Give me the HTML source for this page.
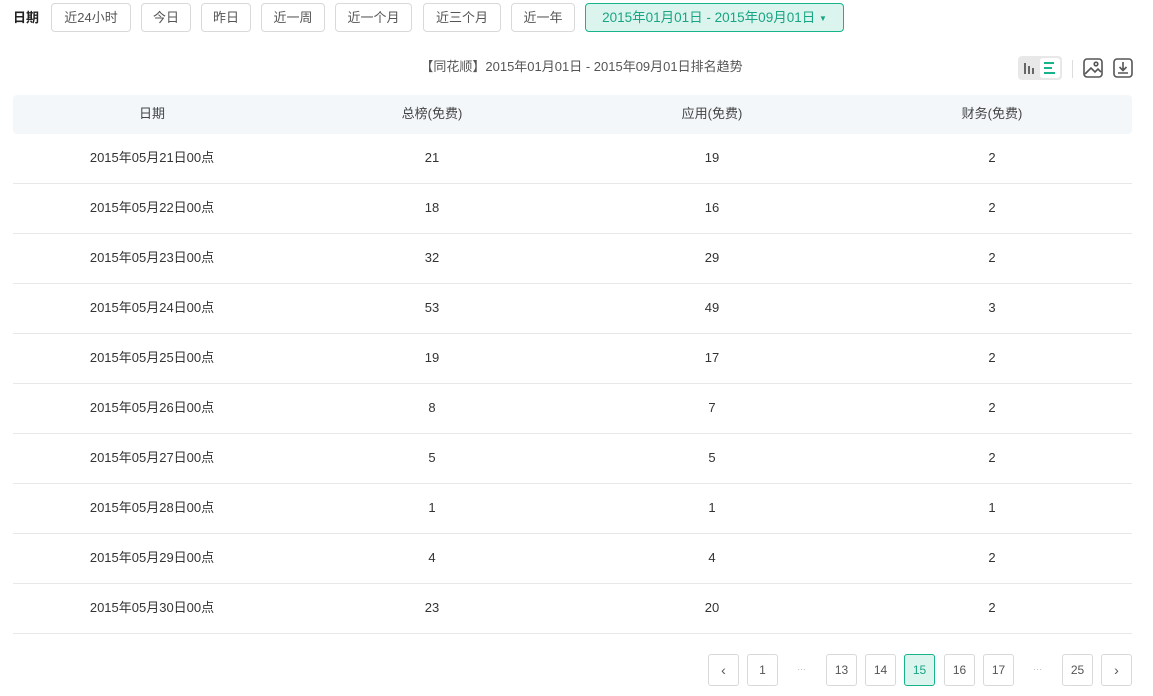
<!DOCTYPE html>
<html><head><meta charset="utf-8"><style>
*{margin:0;padding:0;box-sizing:border-box}
body{width:1153px;height:696px;background:#fff;font-family:"Liberation Sans","Noto Sans CJK SC",sans-serif;color:#333;position:relative;overflow:hidden;font-size:13px}
.abs{position:absolute}
.btn{position:absolute;top:3px;height:29px;border:1px solid #d9d9d9;border-radius:4px;line-height:27px;text-align:center;color:#555;font-size:13px}
.sel{border-color:#17b38a;background:#dcf4ee;color:#17a583}
.th{position:absolute;top:95px;left:13px;width:1119px;height:39px;background:#f3f7fa;border-radius:4px}
.cell{position:absolute;width:280px;text-align:center;font-size:13px;line-height:16px;height:16px}
.line{position:absolute;left:13px;width:1119px;height:1px;background:#e8e8e8}
.pg{position:absolute;top:654px;width:31px;height:32px;border:1px solid #d9d9d9;border-radius:3px;text-align:center;line-height:30px;font-size:12px;color:#555}
.dots{position:absolute;top:654px;line-height:30px;font-size:9px;color:#bbb}
</style></head><body>
<div class="abs" style="left:13px;top:3px;line-height:29px;font-weight:bold;font-size:13px;color:#222">日期</div>
<div class="btn" style="left:51px;width:80px">近24小时</div>
<div class="btn" style="left:141px;width:50px">今日</div>
<div class="btn" style="left:201px;width:50px">昨日</div>
<div class="btn" style="left:261px;width:64px">近一周</div>
<div class="btn" style="left:335px;width:77px">近一个月</div>
<div class="btn" style="left:423px;width:78px">近三个月</div>
<div class="btn" style="left:511px;width:64px">近一年</div>
<div class="btn sel" style="left:585px;width:259px;font-size:13.5px">2015年01月01日 - 2015年09月01日 <span style="font-size:8px;vertical-align:1px">▼</span></div>

<div class="abs" style="left:0;width:1153px;top:59px;line-height:16px;text-align:center;font-size:13px;color:#555;padding-left:10px">【同花顺】2015年01月01日 - 2015年09月01日排名趋势</div>

<div class="abs" style="left:1018px;top:56px;width:44px;height:24px;background:#e8e8e8;border-radius:4px"></div>
<div class="abs" style="left:1040px;top:58px;width:20px;height:20px;background:#fff;border-radius:3px"></div>
<svg class="abs" style="left:1018px;top:56px" width="44" height="24">
<g stroke="#666" stroke-width="2"><line x1="7" y1="7" x2="7" y2="18"/><line x1="11" y1="10" x2="11" y2="18"/><line x1="15" y1="12" x2="15" y2="18"/></g>
<g stroke="#17b38a" stroke-width="2"><line x1="26" y1="7" x2="36" y2="7"/><line x1="26" y1="12" x2="34" y2="12"/><line x1="26" y1="17" x2="37" y2="17"/></g>
</svg>
<div class="abs" style="left:1072px;top:60px;width:1px;height:18px;background:#ddd"></div>
<svg class="abs" style="left:1082px;top:57px" width="22" height="22" fill="none" stroke="#555" stroke-width="1.6">
<rect x="2" y="2" width="18" height="18" rx="3"/><path d="M3 17 L9 11 L13 15 L16 12 L19 15"/><circle cx="14" cy="7" r="1.8"/>
</svg>
<svg class="abs" style="left:1112px;top:57px" width="22" height="22" fill="none" stroke="#555" stroke-width="1.6">
<rect x="2" y="2" width="18" height="18" rx="3"/><path d="M11 5 V13 M7.5 10 L11 13.5 L14.5 10 M6 16 H16"/>
</svg>

<div class="th"></div>
<div class="cell" style="left:12px;top:106px;color:#444">日期</div>
<div class="cell" style="left:292px;top:106px;color:#444">总榜(免费)</div>
<div class="cell" style="left:572px;top:106px;color:#444">应用(免费)</div>
<div class="cell" style="left:852px;top:106px;color:#444">财务(免费)</div>

<div id="rows"></div>
<script>
var d=[[21,19,2],[18,16,2],[32,29,2],[53,49,3],[19,17,2],[8,7,2],[5,5,2],[1,1,1],[4,4,2],[23,20,2]];
var h='';
d.forEach(function(r,i){var y=150+i*50;
h+='<div class="cell" style="left:12px;top:'+y+'px">2015年05月'+(21+i)+'日00点</div>';
h+='<div class="cell" style="left:292px;top:'+y+'px">'+r[0]+'</div>';
h+='<div class="cell" style="left:572px;top:'+y+'px">'+r[1]+'</div>';
h+='<div class="cell" style="left:852px;top:'+y+'px">'+r[2]+'</div>';
h+='<div class="line" style="top:'+(183+i*50)+'px"></div>';});
document.getElementById('rows').innerHTML=h;
</script>

<div class="pg" style="left:708px;font-size:14px">‹</div>
<div class="pg" style="left:747px">1</div>
<div class="dots" style="left:797px">···</div>
<div class="pg" style="left:826px">13</div>
<div class="pg" style="left:865px">14</div>
<div class="pg" style="left:904px;border-color:#17b38a;background:#dcf4ee;color:#17a583">15</div>
<div class="pg" style="left:944px">16</div>
<div class="pg" style="left:983px">17</div>
<div class="dots" style="left:1033px">···</div>
<div class="pg" style="left:1062px">25</div>
<div class="pg" style="left:1101px;font-size:14px">›</div>
</body></html>
